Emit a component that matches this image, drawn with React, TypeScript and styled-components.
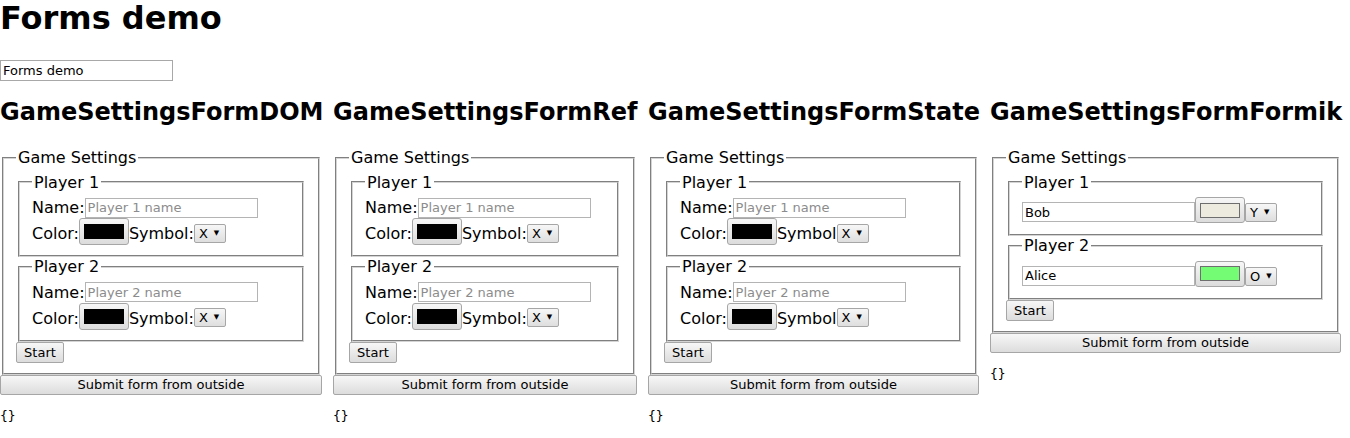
import React from "react";
import styled, { createGlobalStyle } from "styled-components";

const Global = createGlobalStyle`
  body {
    margin: 0;
    font-family: "DejaVu Sans", sans-serif;
    font-size: 16px;
    color: #000;
    background: #fff;
  }
`;

const Title = styled.h1`
  font-size: 32px;
  font-weight: bold;
  line-height: 37px;
  margin: 0 0 23px;
`;

const TopInput = styled.input`
  display: block;
  box-sizing: border-box;
  width: 173px;
  height: 21px;
  margin: 0 0 17px;
  padding: 0 2px;
  border: 1px solid #a8a8a8;
  font-family: "DejaVu Sans", sans-serif;
  font-size: 13px;
  color: #000;
  outline: none;
`;

const Columns = styled.div`
  display: flex;
  align-items: flex-start;
  gap: 11px;
`;

const Column = styled.section<{ $w: number }>`
  width: ${(p) => p.$w}px;
  flex: none;
`;

const ColumnTitle = styled.h2`
  font-size: 24px;
  font-weight: bold;
  line-height: 28px;
  margin: 0 0 22px;
  white-space: nowrap;
`;

const Fieldset = styled.fieldset`
  margin: 0 2px;
  padding: 0.35em 0.75em 0.625em;
  border: 2px groove #d4d4d4;
  min-width: 0;
`;

const Legend = styled.legend`
  padding: 0 2px;
  font-size: 16px;
  line-height: normal;
`;

const Row = styled.div<{ $h: number }>`
  display: flex;
  align-items: center;
  height: ${(p) => p.$h}px;
  white-space: nowrap;
`;

const FormikRow = styled.div`
  display: flex;
  align-items: flex-start;
  height: 27px;
`;

const Label = styled.span<{ $drop?: number }>`
  font-size: 16px;
  line-height: 19px;
  margin-top: ${(p) => (p.$drop ?? 0) * 2}px;
`;

const TextInput = styled.input<{ $mt?: number }>`
  box-sizing: border-box;
  width: 173px;
  height: 20px;
  margin: ${(p) => p.$mt ?? 0}px 0 0;
  padding: 0 2px;
  border: 1px solid #b4b4b4;
  font-family: "DejaVu Sans", sans-serif;
  font-size: 13px;
  color: #000;
  background: #fff;
  outline: none;
  &::placeholder {
    color: #8c8c8c;
  }
`;

const ColorButton = styled.span<{ $h?: number }>`
  box-sizing: border-box;
  display: flex;
  align-items: center;
  justify-content: center;
  width: 50px;
  height: ${(p) => p.$h ?? 26}px;
  border: 1px solid #a6a6a6;
  border-radius: 3px;
  background: linear-gradient(#f7f7f7, #dcdcdc);
  flex: none;
`;

const Swatch = styled.span<{ $c: string }>`
  box-sizing: border-box;
  width: 40px;
  height: 15px;
  border: 1px solid ${(p) => (p.$c === "#000000" ? "#000" : "#6e6e6e")};
  background: ${(p) => p.$c};
`;

const Select = styled.span<{ $mt?: number }>`
  box-sizing: border-box;
  display: flex;
  align-items: center;
  gap: 6px;
  width: 32px;
  height: 19px;
  margin-top: ${(p) => p.$mt ?? 0}px;
  padding: 0 0 0 4px;
  border: 1px solid #a6a6a6;
  border-radius: 2px;
  background: linear-gradient(#f7f7f7, #dedede);
  font-size: 13px;
  flex: none;
`;

const Arrow = styled.span`
  font-size: 7px;
  line-height: 1;
`;

const Button = styled.button<{ $full?: boolean }>`
  box-sizing: border-box;
  display: block;
  width: ${(p) => (p.$full ? "100%" : "48px")};
  height: ${(p) => (p.$full ? "20px" : "21px")};
  margin: 0;
  padding: 0;
  border: 1px solid #a6a6a6;
  border-radius: 2px;
  background: linear-gradient(#f7f7f7, #dcdcdc);
  font-family: "DejaVu Sans", sans-serif;
  font-size: 13px;
  color: #000;
`;

const Output = styled.pre`
  margin: 13px 0;
  font-family: "DejaVu Sans Mono", monospace;
  font-size: 13px;
  line-height: 15px;
`;

function PlayerFields({ n, colon }: { n: number; colon: boolean }) {
  return (
    <Fieldset>
      <Legend>Player {n}</Legend>
      <Row $h={21}>
        <Label>Name:</Label>
        <TextInput placeholder={`Player ${n} name`} readOnly />
      </Row>
      <Row $h={27}>
        <Label $drop={2}>Color:</Label>
        <ColorButton $h={27}>
          <Swatch $c="#000000" />
        </ColorButton>
        <Label $drop={2}>{colon ? "Symbol:" : "Symbol"}</Label>
        <Select $mt={3}>
          X<Arrow>▼</Arrow>
        </Select>
      </Row>
    </Fieldset>
  );
}

function ClassicForm({ title, width, colon }: { title: string; width: number; colon: boolean }) {
  return (
    <Column $w={width}>
      <ColumnTitle>{title}</ColumnTitle>
      <Fieldset>
        <Legend>Game Settings</Legend>
        <PlayerFields n={1} colon={colon} />
        <PlayerFields n={2} colon={colon} />
        <Button>Start</Button>
      </Fieldset>
      <Button $full>Submit form from outside</Button>
      <Output>{"{}"}</Output>
    </Column>
  );
}

function FormikPlayer({ n, name, color, symbol }: { n: number; name: string; color: string; symbol: string }) {
  return (
    <Fieldset>
      <Legend>Player {n}</Legend>
      <FormikRow>
        <TextInput $mt={5} value={name} readOnly />
        <ColorButton>
          <Swatch $c={color} />
        </ColorButton>
        <Select $mt={6}>
          {symbol}
          <Arrow>▼</Arrow>
        </Select>
      </FormikRow>
    </Fieldset>
  );
}

export default function App() {
  return (
    <>
      <Global />
      <Title>Forms demo</Title>
      <TopInput value="Forms demo" readOnly />
      <Columns>
        <ClassicForm title="GameSettingsFormDOM" width={322} colon />
        <ClassicForm title="GameSettingsFormRef" width={304} colon />
        <ClassicForm title="GameSettingsFormState" width={331} colon={false} />
        <Column $w={351}>
          <ColumnTitle>GameSettingsFormFormik</ColumnTitle>
          <Fieldset>
            <Legend>Game Settings</Legend>
            <FormikPlayer n={1} name="Bob" color="#edebdf" symbol="Y" />
            <FormikPlayer n={2} name="Alice" color="#74fc74" symbol="O" />
            <Button>Start</Button>
          </Fieldset>
          <Button $full>Submit form from outside</Button>
          <Output>{"{}"}</Output>
        </Column>
      </Columns>
    </>
  );
}
